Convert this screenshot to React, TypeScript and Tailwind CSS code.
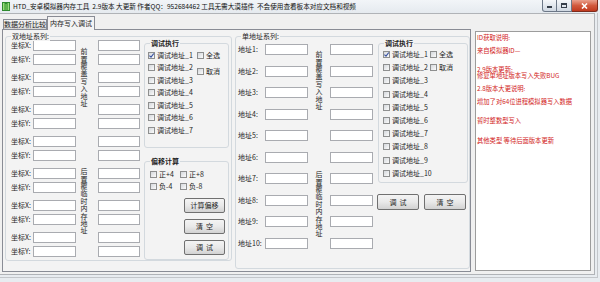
import React from 'react';

const Cb = ({ checked = false }: { checked?: boolean }) => (
  <span className="flex h-[7px] w-[7px] shrink-0 items-center justify-center border border-[#8e8f8f] bg-linear-to-br from-[#d5d8dc] to-[#fbfbfb]">
    {checked && (
      <svg viewBox="0 0 5 5" className="h-[5px] w-[5px] overflow-visible">
        <path d="M0.4 2.6 L2 4.1 L4.8 0.5" fill="none" stroke="#3650a0" strokeWidth={1.1} />
      </svg>
    )}
  </span>
);

const CheckItem = ({ label, checked, h }: { label: string; checked?: boolean; h: string }) => (
  <div className={`flex items-center gap-[2px] ${h}`}>
    <Cb checked={checked} />
    <span className="whitespace-nowrap">{label}</span>
  </div>
);

const Field = ({ w }: { w: string }) => (
  <input readOnly className={`h-[11px] ${w} border border-[#a9abb0] bg-white outline-none`} />
);

const Btn = ({ label, w, h }: { label: string; w: string; h: string }) => (
  <button className={`${w} ${h} rounded-[2px] border border-[#707070] bg-linear-to-b from-[#f4f4f4] via-[#e9e9e9] to-[#d2d2d2] text-[7px] leading-none whitespace-pre`}>
    {label}
  </button>
);

const Group = ({
  title,
  bold,
  className,
  children,
}: {
  title: string;
  bold?: boolean;
  className: string;
  children: React.ReactNode;
}) => (
  <div className={`relative shrink-0 rounded-[3px] border border-[#d3d9de] ${className}`}>
    <span
      className={`absolute -top-[5px] left-[5px] bg-[#f3f3f3] px-px leading-[9px] whitespace-nowrap ${bold ? 'font-bold' : ''}`}
    >
      {title}
    </span>
    {children}
  </div>
);

// 竖排标签：一列一个字
const VText = ({ text, className = '' }: { text: string; className?: string }) => (
  <div className={`leading-[8px] tracking-[0.4px] [text-orientation:upright] [writing-mode:vertical-rl] ${className}`}>
    {text}
  </div>
);

const pairs = [0, 1, 2, 3, 4, 5, 6];
const singles = [1, 2, 3, 4, 5, 6, 7, 8, 9, 10];

const infoText = [
  'ID获取说明:',
  '',
  '来自模拟器ID—',
  '',
  '',
  '2.9版本更新:',
  '修复单地址版本写入失败BUG',
  '',
  '2.8版本大更说明:',
  '',
  '增加了对64位进程模拟器写入数据',
  '',
  '',
  '暂时整数型写入',
  '',
  '',
  '其他类型 等待后面版本更新',
].join('\n');

const TitleBar = () => (
  <div className="flex h-[13px] shrink-0 items-start bg-linear-to-b from-[#f2f5f8] to-[#e5eaef]">
    <svg className="ml-[2px] mt-[2px] h-[9px] w-[8px]" viewBox="0 0 8 9">
      <rect x="0" y="0" width="8" height="9" fill="#2f8a2f" />
      <rect x="1" y="1" width="1.5" height="7" fill="#9be07f" />
      <rect x="3.3" y="2" width="1.5" height="6" fill="#6cc255" />
      <rect x="5.6" y="1" width="1.5" height="7" fill="#9be07f" />
    </svg>
    <span className="ml-[3px] mt-[2px] whitespace-pre text-[6.6px] leading-[8px] text-[#111]">
      HTD_安卓模拟器内存工具  2.9版本 大更新 作者QQ：952684462 工具无需大漠插件  不会使用查看板本对应文档和视频
    </span>
    <div className="ml-auto mr-[2px] flex h-[12px]">
      <div className="flex h-full w-[15px] items-end justify-center rounded-bl-[3px] border border-t-0 border-[#6c7787] bg-linear-to-b from-[#f5f7fa] to-[#d0d8e2] pb-[3px]">
        <span className="h-[2px] w-[5px] bg-[#363e4a]" />
      </div>
      <div className="flex h-full w-[15px] items-center justify-center border-b border-r border-[#6c7787] bg-linear-to-b from-[#f5f7fa] to-[#d0d8e2]">
        <span className="h-[5px] w-[6px] border border-t-2 border-[#363e4a]" />
      </div>
      <div className="flex h-full w-[26px] items-center justify-center rounded-br-[3px] border-b border-r border-[#7d2b1c] bg-linear-to-b from-[#e9a08d] via-[#d25a3e] to-[#c0391e]">
        <svg viewBox="0 0 7 6" className="h-[6px] w-[7px]">
          <path d="M1 0.5 L6 5.5 M6 0.5 L1 5.5" stroke="#fff" strokeWidth={1.6} />
        </svg>
      </div>
    </div>
  </div>
);

const LeftGroup = () => (
  <Group title="双地址系列:" className="ml-px h-[225px] w-[227px]">
    <div className="flex pl-[5px] pt-[3px]">
      <div className="flex flex-col gap-[7px]">
        {pairs.map((p) => (
          <div key={p} className="flex flex-col gap-[3px]">
            {['坐标X:', '坐标Y:'].map((l) => (
              <div key={l} className="flex h-[11px] items-center">
                <span className="w-[22px] whitespace-nowrap">{l}</span>
                <Field w="w-[43px]" />
              </div>
            ))}
          </div>
        ))}
      </div>
      <div className="flex w-[22px] flex-col items-start pl-[4px] pt-[8px]">
        <VText text="前置覆盖写入地址" />
        <VText text="后置覆临时内存地址" className="mt-[61px]" />
      </div>
      <div className="flex flex-col gap-[7px]">
        {pairs.map((p) => (
          <div key={p} className="flex flex-col gap-[3px]">
            <Field w="w-[42px]" />
            <Field w="w-[42px]" />
          </div>
        ))}
      </div>
      <div className="ml-[4px] flex w-[85px] flex-col pt-[3px]">
        <Group title="调试执行" bold className="h-[105px] w-[85px]">
          <div className="flex pl-[3px] pt-[5px]">
            <div className="flex w-[49px] flex-col">
              {[1, 2, 3, 4, 5, 6, 7].map((n) => (
                <CheckItem key={n} label={`调试地址_${n}`} checked={n === 1} h="h-[12.5px]" />
              ))}
            </div>
            <div className="flex flex-col gap-[4px]">
              <CheckItem label="全选" h="h-[12.5px]" />
              <CheckItem label="取消" h="h-[12.5px]" />
            </div>
          </div>
        </Group>
        <Group title="偏移计算" bold className="mt-[13px] flex h-[99px] w-[85px] flex-col">
          <div className="flex pl-[5px] pt-[6px]">
            <div className="flex w-[30px] flex-col">
              <CheckItem label="正+4" h="h-[12px]" />
              <CheckItem label="负-4" h="h-[12px]" />
            </div>
            <div className="flex flex-col">
              <CheckItem label="正+8" h="h-[12px]" />
              <CheckItem label="负-8" h="h-[12px]" />
            </div>
          </div>
          <div className="mr-[3px] mt-[6px] flex flex-col gap-[6px] self-end">
            <Btn label="计算偏移" w="w-[41px]" h="h-[15px]" />
            <Btn label="清  空" w="w-[41px]" h="h-[15px]" />
            <Btn label="调  试" w="w-[41px]" h="h-[15px]" />
          </div>
        </Group>
      </div>
    </div>
  </Group>
);

const RightGroup = () => (
  <Group title="单地址系列:" className="h-[233px] w-[235px]">
    <div className="flex pl-[2px] pt-[7px]">
      <div className="flex flex-col gap-[10.5px]">
        {singles.map((n) => (
          <div key={n} className="flex h-[11px] items-center">
            <span className="w-[27px] whitespace-nowrap">{`地址${n}:`}</span>
            <Field w="w-[43px]" />
          </div>
        ))}
      </div>
      <div className="flex w-[22px] flex-col items-center pt-[7px]">
        <VText text="前置覆盖写入地址" />
        <VText text="后置覆临时内存地址" className="mt-[61px]" />
      </div>
      <div className="flex flex-col gap-[10.5px]">
        {singles.map((n) => (
          <Field key={n} w="w-[43px]" />
        ))}
      </div>
      <div className="-mt-px ml-[5px] flex w-[90px] flex-col">
        <Group title="调试执行" bold className="h-[140px] w-[90px]">
          <div className="flex pl-[4px] pt-[4px]">
            <div className="flex w-[47px] flex-col">
              {singles.map((n) => (
                <CheckItem key={n} label={`调试地址_${n}`} checked={n === 1} h="h-[13.2px]" />
              ))}
            </div>
            <div className="flex flex-col">
              <CheckItem label="全选" h="h-[13.2px]" />
              <CheckItem label="取消" h="h-[13.2px]" />
            </div>
          </div>
        </Group>
        <div className="-ml-px mt-[11px] flex gap-[5px]">
          <Btn label="调  试" w="w-[42px]" h="h-[16px]" />
          <Btn label="清  空" w="w-[42px]" h="h-[16px]" />
        </div>
      </div>
    </div>
  </Group>
);

const TabControl = () => (
  <div className="mt-[2px] flex h-[256px] w-[469px] shrink-0 flex-col">
    <div className="flex h-[13px] items-end pl-px">
      <div className="flex h-[10px] w-[44px] items-center justify-center border border-b-0 border-[#898c95] bg-linear-to-b from-[#f4f4f4] to-[#d8d8d8]">
        数据分析比较
      </div>
      <div className="relative z-10 -mb-px flex h-[14px] w-[48px] items-center justify-center border border-b-0 border-[#898c95] bg-[#f3f3f3] pb-[1px]">
        内存写入调试
      </div>
    </div>
    <div className="flex h-[243px] items-start gap-[3px] border border-[#898c95] bg-[#f3f3f3] pl-px pt-[6px]">
      <LeftGroup />
      <RightGroup />
    </div>
  </div>
);

const InfoBox = () => (
  <div className="ml-[4px] mt-[17px] h-[240px] w-[116px] shrink-0 border border-[#9c9c9c] bg-white pl-px pt-[3px]">
    <div className="whitespace-pre text-[6.3px] leading-[6.4px] text-[#d21c1c]">{infoText}</div>
  </div>
);

export default function App() {
  return (
    <div className="flex h-[282px] w-[600px] flex-col overflow-hidden bg-[#e8ecf0] font-['Noto_Sans_CJK_SC',sans-serif] text-[7px] leading-none text-[#1e1e1e]">
      <TitleBar />
      <div className="mb-[4px] mr-[2px] flex-1 border-b border-r border-[#c3c6ca] pb-[2px] pr-[2px]">
        <div className="flex h-full border-b border-r border-t border-[#b0b3b7] bg-[#f0f0f0] pl-[2px]">
          <TabControl />
          <InfoBox />
        </div>
      </div>
    </div>
  );
}
